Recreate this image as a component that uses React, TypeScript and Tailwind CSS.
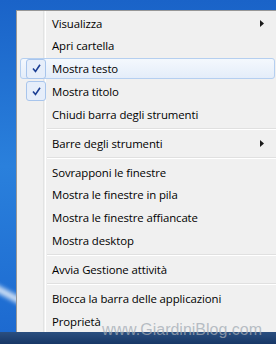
import type { ReactNode } from "react";

type Item =
  | { kind: "item"; label: string; checked?: boolean; submenu?: boolean; hover?: boolean }
  | { kind: "sep" };

const items: Item[] = [
  { kind: "item", label: "Visualizza", submenu: true },
  { kind: "item", label: "Apri cartella" },
  { kind: "item", label: "Mostra testo", checked: true, hover: true },
  { kind: "item", label: "Mostra titolo", checked: true },
  { kind: "item", label: "Chiudi barra degli strumenti" },
  { kind: "sep" },
  { kind: "item", label: "Barre degli strumenti", submenu: true },
  { kind: "sep" },
  { kind: "item", label: "Sovrapponi le finestre" },
  { kind: "item", label: "Mostra le finestre in pila" },
  { kind: "item", label: "Mostra le finestre affiancate" },
  { kind: "item", label: "Mostra desktop" },
  { kind: "sep" },
  { kind: "item", label: "Avvia Gestione attività" },
  { kind: "sep" },
  { kind: "item", label: "Blocca la barra delle applicazioni" },
  { kind: "item", label: "Proprietà" },
];

function Check() {
  return (
    <svg width="9" height="9" viewBox="0 0 9 9" className="block">
      <path d="M1 4.5 L3.5 7.5 L8 0.8" fill="none" stroke="#1c3f94" strokeWidth="1.6" />
    </svg>
  );
}

function Arrow() {
  return (
    <svg width="4" height="7" viewBox="0 0 4 7" className="block">
      <path d="M0 0 L4 3.5 L0 7 Z" fill="#1a1a1a" />
    </svg>
  );
}

function Row({ item }: { item: Extract<Item, { kind: "item" }> }) {
  let box: ReactNode = null;
  if (item.checked) {
    box = (
      <div className="flex h-[20px] w-[20px] items-center justify-center rounded-[3px] border border-[#a8c5ec] bg-[#e6eefa]">
        <Check />
      </div>
    );
  }
  return (
    <div className="relative flex h-[22.7px] items-center">
      {item.hover && (
        <div className="absolute inset-x-[3px] top-[1px] bottom-[1px] rounded-[3px] border border-[#b5cff0] bg-gradient-to-b from-[#f4f8fd] to-[#e4edf9]" />
      )}
      <div className="relative flex w-[35px] shrink-0 justify-center pl-[3px]">{box}</div>
      <span className="relative flex-1 text-[11.4px] tracking-[-0.1px] text-black">{item.label}</span>
      {item.submenu && (
        <div className="relative mr-[14px]">
          <Arrow />
        </div>
      )}
    </div>
  );
}

export default function App() {
  return (
    <div
      className="relative flex h-[344px] w-[276px] flex-col overflow-hidden bg-[#1f6fd3]"
      style={{ fontFamily: '"Open Sans", "Noto Sans", sans-serif' }}
    >
      {/* desktop */}
      <div className="relative flex-1 bg-gradient-to-b from-[#1a63c8] via-[#2a80dc] to-[#1d6ad0]">
        <div className="absolute left-[-20px] top-[292px] h-[7px] w-[60px] rotate-[28deg] bg-white/75 blur-[2px]" />
      </div>
      {/* taskbar */}
      <div className="h-[12px] bg-gradient-to-b from-[#2b4f80] to-[#173766]" />

      {/* context menu */}
      <div className="absolute left-[16px] top-[10px] h-[322px] w-[262px] border-l border-t border-[#979797] bg-[#f0f0f0] pt-[1px]">
        <div className="absolute bottom-0 left-[26px] top-0 w-[2px] border-l border-[#e2e3e3] shadow-[1px_0_0_#ffffff]" />
        {items.map((it, i) =>
          it.kind === "sep" ? (
            <div key={i} className="ml-[30px] flex h-[6.4px] items-center">
              <div className="h-[2px] w-full border-b border-t border-[#e0e0e0] border-b-white" />
            </div>
          ) : (
            <Row key={i} item={it} />
          )
        )}
      </div>

      {/* watermark */}
      <div
        className="absolute left-[102px] top-[318px] text-[16px] text-[#a3abb4]/75"
        style={{ fontFamily: '"Liberation Sans", Arial, sans-serif' }}
      >
        www.GiardiniBlog.com
      </div>
    </div>
  );
}
